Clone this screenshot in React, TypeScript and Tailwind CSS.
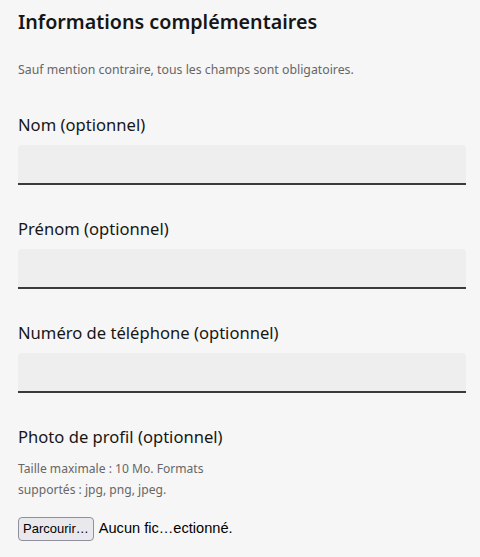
const fields = ["Nom (optionnel)", "Prénom (optionnel)", "Numéro de téléphone (optionnel)"];

export default function App() {
  return (
    <div
      className="min-h-[557px] bg-[#f6f6f6] pl-[18px] pr-[14px] pt-[8px] text-[#161616]"
      style={{ fontFamily: '"Noto Sans", "Open Sans", sans-serif' }}
    >
      <h2 className="text-[19.7px] font-semibold leading-[28px]">Informations complémentaires</h2>
      <p className="mt-[24px] text-[12.3px] leading-[20px] text-[#666]">
        Sauf mention contraire, tous les champs sont obligatoires.
      </p>

      <div className="mt-[33px] flex flex-col gap-[32px]">
        {fields.map((label) => (
          <div key={label}>
            <label className="block text-[16.6px] leading-[24px]">{label}</label>
            <input
              type="text"
              className="mt-[8px] block h-[40px] w-full rounded-t-[4px] border-b-2 border-[#3a3a3a] bg-[#eeeeee] px-4 outline-none"
            />
          </div>
        ))}

        <div>
          <label className="block text-[16.6px] leading-[24px]">Photo de profil (optionnel)</label>
          <p className="mt-[9px] text-[12.1px] leading-[21px] text-[#666]">
            Taille maximale : 10 Mo. Formats
            <br />
            supportés : jpg, png, jpeg.
          </p>
          <div className="mt-[17px] flex items-center gap-[5px]" style={{ fontFamily: '"Liberation Sans", sans-serif' }}>
            <button className="h-[24px] rounded-[4px] border border-[#8f8f9d] bg-[#e9e9ed] px-[4px] text-[13px] leading-[20px] text-black">
              Parcourir…
            </button>
            <span className="text-[14.6px] text-black">Aucun fic…ectionné.</span>
          </div>
        </div>
      </div>
    </div>
  );
}
